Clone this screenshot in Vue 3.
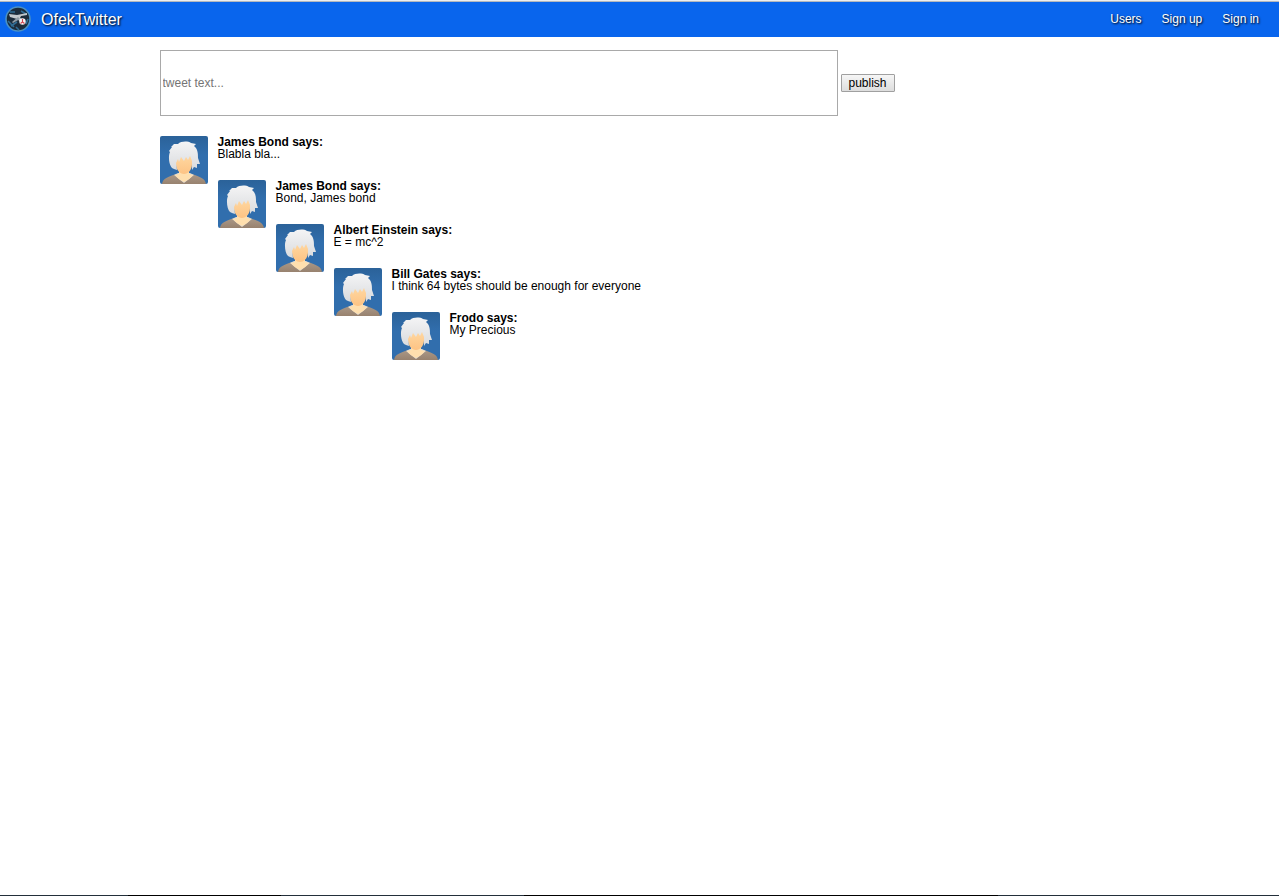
<script setup>
import { ref } from 'vue'

const draft = ref('')
const links = ['Users', 'Sign up', 'Sign in']
const tweets = [
  { author: 'James Bond', text: 'Blabla bla...' },
  { author: 'James Bond', text: 'Bond, James bond' },
  { author: 'Albert Einstein', text: 'E = mc^2' },
  { author: 'Bill Gates', text: 'I think 64 bytes should be enough for everyone' },
  { author: 'Frodo', text: 'My Precious' },
]
</script>

<template>
  <div class="page">
    <header class="bar">
      <svg class="logo" viewBox="0 0 26 26" aria-hidden="true">
        <circle cx="13" cy="13" r="12" fill="#1c2c3a" stroke="#4a90c4" stroke-width="1.6" />
        <path d="M5 6h5M16 5l5 3M3 15l6 6M6 20l6-4M11 21l3 3M21 18l2-5" stroke="#2f6c94" stroke-width="1.6" fill="none" />
        <path d="M4 8l8 1 10-2v2l-6 1-1 2 4 2-2 3-5-4-7-2z" fill="#c3c8cb" />
        <path d="M7 16l6-5 2 2-7 4z" fill="#8e9aa3" />
        <circle cx="17.5" cy="15.5" r="3.2" fill="#f4f4f5" />
        <path d="M17.5 13v3l-2 1.5M17.5 16l2 1.5" stroke="#d2434b" stroke-width="1.1" fill="none" />
      </svg>
      <h1 class="brand">OfekTwitter</h1>
      <nav class="nav">
        <a v-for="link in links" :key="link" href="#">{{ link }}</a>
      </nav>
    </header>

    <main class="content">
      <form class="composer" @submit.prevent>
        <input v-model="draft" class="draft" type="text" placeholder="tweet text..." aria-label="Tweet text" />
        <button class="publish" type="submit">publish</button>
      </form>

      <article v-for="(tweet, i) in tweets" :key="i" class="tweet">
        <svg class="avatar" viewBox="0 0 48 48" aria-hidden="true">
          <defs>
            <linearGradient :id="`hair${i}`" x1="0" y1="0" x2="0" y2="1">
              <stop offset="0" stop-color="#f4f4f5" />
              <stop offset="1" stop-color="#d9dbde" />
            </linearGradient>
            <linearGradient :id="`skin${i}`" x1="0" y1="0" x2="0" y2="1">
              <stop offset="0" stop-color="#ffd9a3" />
              <stop offset="1" stop-color="#fdc384" />
            </linearGradient>
            <linearGradient :id="`coat${i}`" x1="0" y1="0" x2="0" y2="1">
              <stop offset="0" stop-color="#aa9887" />
              <stop offset="1" stop-color="#98826f" />
            </linearGradient>
            <linearGradient :id="`sky${i}`" x1="0" y1="0" x2="0" y2="1">
              <stop offset="0" stop-color="#2b6299" />
              <stop offset="0.4" stop-color="#316ead" />
              <stop offset="1" stop-color="#316ead" />
            </linearGradient>
          </defs>
          <rect width="48" height="48" rx="2" :fill="`url(#sky${i})`" />
          <path d="M2 48C3 42 8 41 16 38H32C40 41 45 42 46 48Z" :fill="`url(#coat${i})`" />
          <path d="M14 39L18 37H30L34 39L24 47Z" fill="#e0dbd3" />
          <path d="M19 33H29V38L33 39C31 42 28 44 24 46C20 44 17 42 15 39L19 38Z" fill="#ffdfae" />
          <path d="M16 18H32V28C32 34 28 38 24 38S16 34 16 28Z" :fill="`url(#skin${i})`" />
          <path d="M11 11L14 8L18 8C21 5 28 5 31 7L36 8L34 10C38 13 38 18 38 22L40 28L37 28L37 32L34 31L32 34L32 25L30 20L28 24L26 21L24 25L21 21L19 26L18 23L16 27L17 34L14 33L12 32C9 29 8 20 10 16L9 15L12 11Z" :fill="`url(#hair${i})`" />
        </svg>
        <strong class="author">{{ tweet.author }} says:</strong>
        <p class="text">{{ tweet.text }}</p>
      </article>
    </main>
    <footer class="edge"></footer>
  </div>
</template>

<style>
body {
  background: #fff;
}
</style>

<style scoped>
.page {
  display: flex;
  flex-direction: column;
  min-height: 100vh;
  font: 12px/12px "Liberation Sans", Arial, sans-serif;
  color: #000;
}
.bar {
  display: flex;
  align-items: center;
  box-sizing: border-box;
  height: 37px;
  padding: 1px 20px 2px 5px;
  background: linear-gradient(#b4b8be 1px, #0965ed 1px);
  border-top: 1px solid #eceef0;
  color: #fff;
  text-shadow: 1px 1px 2px #000;
}
.logo {
  width: 26px;
  height: 26px;
}
.brand {
  margin: 0 0 0 10px;
  padding-top: 2px;
  font-size: 16px;
  line-height: 20px;
  font-weight: normal;
}
.nav {
  display: flex;
  gap: 20px;
  margin-left: auto;
}
.nav a {
  color: inherit;
  text-decoration: none;
}
.content {
  flex: 1;
  box-sizing: border-box;
  width: 100%;
  max-width: 960px;
  margin: 0 auto;
  padding-top: 13px;
}
.composer {
  display: flex;
  align-items: center;
  gap: 3px;
  margin-bottom: 20px;
}
.draft {
  box-sizing: border-box;
  width: 678px;
  height: 66px;
  padding: 2px;
  border: 1px solid #a9a9a9;
  background: #fff;
  font: inherit;
}
.draft::placeholder {
  color: #757575;
}
.publish {
  box-sizing: border-box;
  height: 18px;
  padding: 0 7px;
  border: 1px solid #a0a0a0;
  border-radius: 1px;
  background: linear-gradient(#f6f6f6, #dddddd);
  font: inherit;
  color: #000;
}
/* Avatars are taller than a row, so each float steps in beside the previous one. */
.tweet {
  margin-bottom: 20px;
}
.avatar {
  float: left;
  width: 48px;
  height: 48px;
  margin-right: 10px;
}
.author {
  display: block;
}
.text {
  margin: 0;
}
.edge {
  height: 1px;
  background: linear-gradient(90deg, #232f3a 10%, #000 10% 22%, #232f3a 22% 41%, #000 41% 78%, #232f3a 78%);
}
</style>
